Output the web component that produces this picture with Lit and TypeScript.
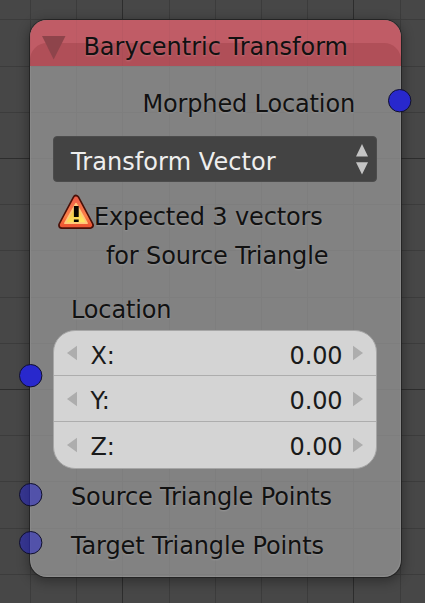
import { LitElement, html, css, svg } from "lit";
import { customElement, property } from "lit/decorators.js";

@customElement("node-socket")
class NodeSocket extends LitElement {
  @property({ type: Boolean, reflect: true }) faded = false;
  static styles = css`
    :host { display: block; width: 24px; height: 24px; }
    svg { display: block; }
    circle { fill: #2828cd; stroke: #10102c; stroke-width: 1; }
    :host([faded]) circle { fill: rgba(40, 40, 205, 0.53); }
  `;
  render() {
    return html`<svg width="24" height="24"><circle cx="11.7" cy="11.7" r="11.2"></circle></svg>`;
  }
}

@customElement("number-field")
class NumberField extends LitElement {
  @property() label = "";
  @property() value = "";
  static styles = css`
    :host { display: flex; align-items: center; height: 46px; box-sizing: border-box; padding: 0 13px 0 13px; color: #1a1a1a; }
    svg { display: block; fill: #adadad; }
    .label { margin-left: 13.4px; flex: 1; }
    .value { margin-right: 10.6px; }
    .label, .value { line-height: 30px; padding-top: 5px; }
  `;
  render() {
    return html`
      <svg width="10" height="16"><path d="M10 0.7V15.3L0 8Z" /></svg>
      <span class="label">${this.label}</span>
      <span class="value">${this.value}</span>
      <svg width="10" height="16"><path d="M0 0.7V15.3L10 8Z" /></svg>
    `;
  }
}

const GRID_X = [30, 76, 122, 169, 215, 261, 307, 353, 400];
const GRID_Y = [19, 66, 112, 158, 204, 250, 297, 343, 389, 435, 481, 528, 574];
const MAJOR = new Set(["x122", "x353", "y158", "y389"]);

@customElement("app-root")
class AppRoot extends LitElement {
  static styles = css`
    :host { display: block; position: relative; width: 425px; height: 603px; overflow: hidden; background: #474747;
      font: 24px/30px "DejaVu Sans", sans-serif; letter-spacing: -0.14px; color: #111; box-sizing: border-box; padding: 20px 24px 26px 30px; }
    .grid { position: absolute; inset: 0; pointer-events: none; }
    .grid line { stroke: #3c3c3c; stroke-width: 1; }
    .grid .major { stroke: #2d2d2d; }
    .grid.over { inset: -20px auto auto -30px; opacity: 0.04; }
    .node { position: relative; width: 371px; height: 557px; border-radius: 17px; background: #828282;
      box-shadow: 0 0 0 1px rgba(25, 25, 25, 0.6), 0 3px 12px 2px rgba(0, 0, 0, 0.32); white-space: nowrap; }
    .node::before { content: ""; position: absolute; inset: 0; border-radius: 17px; pointer-events: none;
      box-shadow: inset -1px -1px 1px rgba(255, 255, 255, 0.1), inset 1px 0 1px rgba(255, 255, 255, 0.1); }
    .header { position: relative; height: 46px; overflow: hidden; border-radius: 17px 17px 0 0; background: #c05c66;
      display: flex; box-sizing: border-box; padding: 12px 0 0 12px; }
    .shade { position: absolute; left: 0; right: 0; top: 23px; height: 40px; border-radius: 17px 17px 0 0; background: #b04f58; }
    .collapse { position: relative; margin-top: 4px; fill: #8e444b; }
    .title { position: relative; margin-left: 17.4px; letter-spacing: 0; }
    .text { text-shadow: 0 1px 2px rgba(255, 255, 255, 0.18); }
    .body { position: relative; display: flex; flex-direction: column; padding: 0 24px 0 23px; }
    .output { margin-top: 23px; text-align: right; padding-right: 22px; }
    .select { margin-top: 17px; height: 46px; box-sizing: border-box; border-radius: 4px; background: #434343; border: 1px solid #4c4c4c;
      color: #eee; display: flex; justify-content: space-between; padding: 10px 8px 0 17px; letter-spacing: 0.08px; }
    .select svg { fill: #c4c4c4; margin-top: -3px; }
    .warning { margin-top: 20px; height: 30px; display: flex; padding-left: 4px; }
    .warning svg { margin: -8px -1px 0 0; flex: none; }
    .second { margin-top: 9px; padding-left: 53px; }
    .caption { margin-top: 24px; padding-left: 18px; }
    .fields { margin-top: 5px; height: 139px; box-sizing: border-box; border-radius: 22px; background: #d4d4d4; border: 1px solid #a6a6a6; }
    number-field:first-child { height: 44px; }
    number-field + number-field { border-top: 1px solid #adadad; }
    .input { padding-left: 18px; }
    .source { margin-top: 13px; }
    .target { margin-top: 19px; }
    .socket { position: absolute; }
    .s-out { left: 358px; top: 69px; }
    .s-loc { left: -11px; top: 344px; }
    .s-src { left: -11px; top: 462.5px; }
    .s-tgt { left: -11px; top: 511px; }
  `;

  grid(extra: string) {
    return html`<svg class="grid ${extra}" width="425" height="603">
      ${GRID_X.map((x) => svg`<line class=${MAJOR.has("x" + x) ? "major" : ""} x1=${x + 0.5} x2=${x + 0.5} y1="0" y2="603"></line>`)}
      ${GRID_Y.map((y) => svg`<line class=${MAJOR.has("y" + y) ? "major" : ""} x1="0" x2="425" y1=${y + 0.5} y2=${y + 0.5}></line>`)}
    </svg>`;
  }

  render() {
    return html`
      ${this.grid("")}
      <div class="node">
        <div class="header">
          <div class="shade"></div>
          <svg class="collapse" width="24" height="24"><path d="M0 0H23.5L11.7 23.5Z" /></svg>
          <span class="title text">Barycentric Transform</span>
        </div>
        ${this.grid("over")}
        <div class="body">
          <div class="output text">Morphed Location</div>
          <div class="select">
            <span>Transform Vector</span>
            <svg width="12" height="31"><path d="M6 0L12 12.4H0ZM0 18.2H12L6 30.5Z" /></svg>
          </div>
          <div class="warning">
            <svg width="38" height="36" viewBox="0 0 38 36">
              <defs>
                <linearGradient id="rim" x1="0" y1="0" x2="0" y2="1"><stop offset="0" stop-color="#ee6048" /><stop offset=".65" stop-color="#fb8048" /><stop offset="1" stop-color="#ee5833" /></linearGradient>
                <linearGradient id="core" x1="0" y1="0" x2=".5" y2="1"><stop offset="0" stop-color="#ffe98a" /><stop offset=".55" stop-color="#f6cf4c" /><stop offset="1" stop-color="#ffe560" /></linearGradient>
              </defs>
              <path d="M19 4.4L33.2 31.2H4.8Z" fill="#4a1008" stroke="#4a1008" stroke-width="7.4" stroke-linejoin="round" />
              <path d="M19 4.8L33 31H5Z" fill="url(#rim)" stroke="url(#rim)" stroke-width="4.4" stroke-linejoin="round" />
              <path d="M19 9.8L30 29.2H8Z" fill="url(#core)" stroke="#ffc879" stroke-width="1.8" stroke-linejoin="round" />
              <path d="M16.9 12H21.7V23H16.9ZM16.9 25.6H21.7V28H16.9Z" fill="#080600" />
            </svg>
            <span class="text">Expected 3 vectors</span>
          </div>
          <div class="second text">for Source Triangle</div>
          <div class="caption text">Location</div>
          <div class="fields">
            ${["X:", "Y:", "Z:"].map((l) => html`<number-field label=${l} value="0.00"></number-field>`)}
          </div>
          <div class="input source text">Source Triangle Points</div>
          <div class="input target text">Target Triangle Points</div>
        </div>
        <node-socket class="socket s-out"></node-socket>
        <node-socket class="socket s-loc"></node-socket>
        <node-socket class="socket s-src" faded></node-socket>
        <node-socket class="socket s-tgt" faded></node-socket>
      </div>
    `;
  }
}
